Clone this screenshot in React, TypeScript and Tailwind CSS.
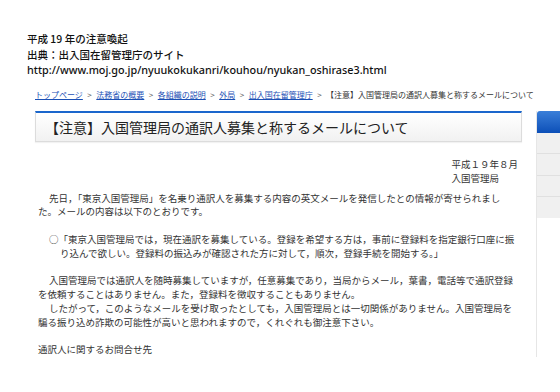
const JP = "font-['Noto_Sans_CJK_JP','Noto_Sans',sans-serif]"

const CRUMBS = ['トップページ', '法務省の概要', '各組織の説明', '外局', '出入国在留管理庁']

function Breadcrumb() {
  return (
    <div className="whitespace-nowrap text-[8px] leading-[12px] text-[#333]">
      {CRUMBS.map((c) => (
        <span key={c}>
          <span className="text-[#1a4fb5] underline">{c}</span>
          <span className="px-[4.5px] text-[#555]">&gt;</span>
        </span>
      ))}
      <span>【注意】入国管理局の通訳人募集と称するメールについて</span>
    </div>
  )
}

function SideStrip() {
  return (
    <div className="w-[24px] shrink-0 flex flex-col border-l border-[#e6e6e6]">
      <div className="h-[22px] rounded-tl-[3px] bg-gradient-to-b from-[#3a7fd9] to-[#0b4fb8]" />
      <div className="h-[85px] bg-[#f0f0f0] flex flex-col">
        <div className="h-[21px] border-b border-[#e0e0e0]" />
        <div className="h-[22px] border-b border-[#e0e0e0]" />
        <div className="h-[21px] border-b border-[#e0e0e0]" />
      </div>
    </div>
  )
}

export default function App() {
  return (
    <div className={`w-[560px] h-[392px] overflow-hidden bg-white ${JP}`}>
      {/* Intro lines */}
      <div className="pt-[31px] pl-[27px] text-[10.5px] leading-[15.5px] font-medium text-[#111]">
        <p>平成 19 年の注意喚起</p>
        <p>出典：出入国在留管理庁のサイト</p>
        <p className="font-['Noto_Sans',sans-serif] text-[10.8px]">http://www.moj.go.jp/nyuukokukanri/kouhou/nyukan_oshirase3.html</p>
      </div>

      {/* Captured page */}
      <div className="mt-[6px] h-[278px] overflow-hidden pl-[35px]">
        <div className="pt-[5px]">
          <Breadcrumb />
        </div>
        <div className="mt-[10px] flex gap-[14px]">
          <div className="w-[487px] shrink-0">
            <div className="h-[31px] flex items-center pl-[9px] border border-t-2 border-[#dcdcdc] border-t-[#1a66cc] bg-gradient-to-b from-white to-[#f1f1f1] shadow-[0_1px_1px_rgba(0,0,0,0.05)]">
              <h1 className="text-[14px] leading-none text-[#222]">【注意】入国管理局の通訳人募集と称するメールについて</h1>
            </div>

            <div className="mt-[15px] flex justify-end pr-[4px] text-[9.5px] leading-[14px] text-[#333]">
              <div>
                <p>平成１９年８月</p>
                <p>入国管理局</p>
              </div>
            </div>

            <div className="mt-[7px] pl-[3px] text-[9.5px] leading-[13.8px] text-[#333] whitespace-nowrap">
              <p className="pl-[11px]">先日，「東京入国管理局」を名乗り通訳人を募集する内容の英文メールを発信したとの情報が寄せられまし</p>
              <p>た。メールの内容は以下のとおりです。</p>

              <div className="mt-[13.8px]">
                <p className="pl-[11px]">○「東京入国管理局では，現在通訳を募集している。登録を希望する方は，事前に登録料を指定銀行口座に振</p>
                <p className="pl-[22px]">り込んで欲しい。登録料の振込みが確認された方に対して，順次，登録手続を開始する。」</p>
              </div>

              <div className="mt-[13.8px]">
                <p className="pl-[11px]">入国管理局では通訳人を随時募集していますが，任意募集であり，当局からメール，葉書，電話等で通訳登録</p>
                <p>を依頼することはありません。また，登録料を徴収することもありません。</p>
                <p className="pl-[11px]">したがって，このようなメールを受け取ったとしても，入国管理局とは一切関係がありません。入国管理局を</p>
                <p>騙る振り込め詐欺の可能性が高いと思われますので，くれぐれも御注意下さい。</p>
              </div>

              <p className="mt-[13.8px]">通訳人に関するお問合せ先</p>
            </div>
          </div>
          <SideStrip />
        </div>
      </div>
    </div>
  )
}
